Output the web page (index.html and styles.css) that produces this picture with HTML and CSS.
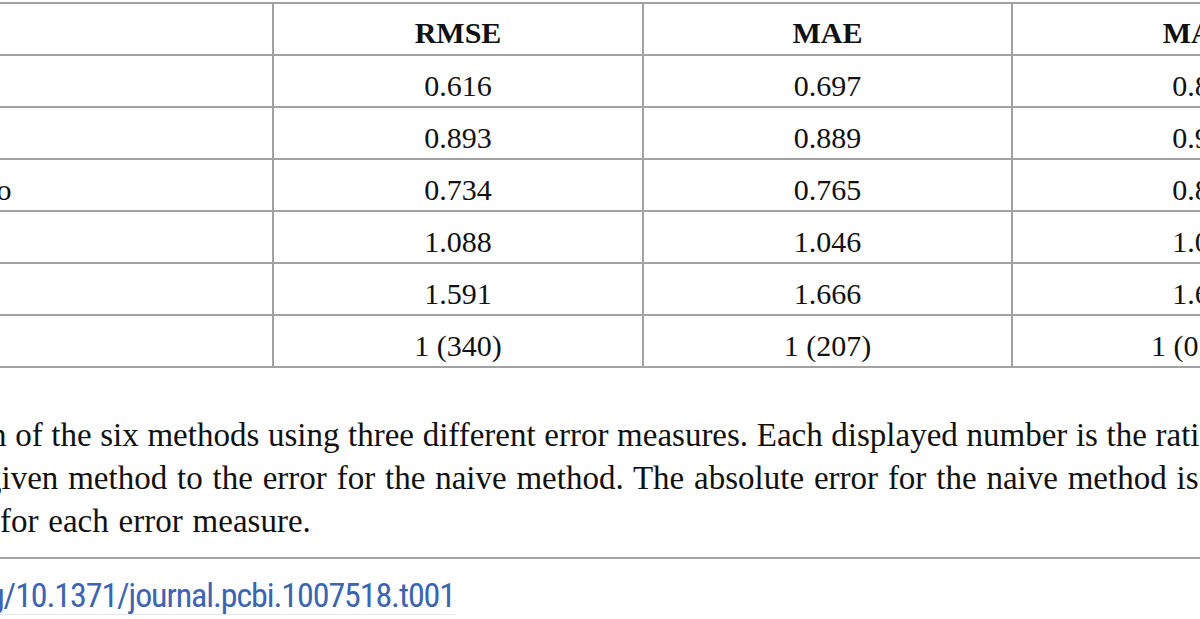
FILE: index.html
```html
<!DOCTYPE html>
<html lang="en">
<head>
<meta charset="utf-8">
<title>Table 1 – error measures</title>
<link rel="stylesheet" href="styles.css">
</head>
<body>
<div class="table" role="table">
  <div class="cell label head" role="columnheader"></div>
  <div class="cell head" role="columnheader">RMSE</div>
  <div class="cell head" role="columnheader">MAE</div>
  <div class="cell head" role="columnheader">MASE</div>

  <div class="cell label">Ensemble</div>
  <div class="cell">0.616</div>
  <div class="cell">0.697</div>
  <div class="cell">0.823</div>

  <div class="cell label">ARIMA</div>
  <div class="cell">0.893</div>
  <div class="cell">0.889</div>
  <div class="cell">0.912</div>

  <div class="cell label">Ridge + Lasso</div>
  <div class="cell">0.734</div>
  <div class="cell">0.765</div>
  <div class="cell">0.847</div>

  <div class="cell label">Prophet</div>
  <div class="cell">1.088</div>
  <div class="cell">1.046</div>
  <div class="cell">1.035</div>

  <div class="cell label">SARIMAX</div>
  <div class="cell">1.591</div>
  <div class="cell">1.666</div>
  <div class="cell">1.642</div>

  <div class="cell label">Naive</div>
  <div class="cell">1 (340)</div>
  <div class="cell">1 (207)</div>
  <div class="cell">1 (0.574)</div>
</div>

<div class="caption">
  <div class="cap-line first">n of the six methods using three different error measures. Each displayed number is the ratio of the error for the</div>
  <div class="cap-line second">given method to the error for the naive method. The absolute error for the naive method is shown in parentheses</div>
  <div class="cap-line">for each error measure.</div>
</div>

<div class="doi">
  <a class="doi-link" href="#">https://doi.org/10.1371/journal.pcbi.1007518.t001</a>
</div>
</body>
</html>
```

FILE: styles.css
```css
html, body {
  margin: 0;
  padding: 0;
  background: #ffffff;
}

body {
  overflow: hidden;
  color: #111111;
  font-family: "Liberation Serif", "Times New Roman", serif;
}

.table {
  display: grid;
  grid-template-columns: 444px 370px 369px 388px;
  width: 1571px;
  margin: 2px 0 0 -170px;
  border-top: 2px solid #a2a2a2;
}

.cell {
  box-sizing: border-box;
  height: 52px;
  padding-top: 13px;
  border-right: 2px solid #a2a2a2;
  border-bottom: 2px solid #a2a2a2;
  font-size: 30px;
  line-height: 33px;
  text-align: center;
  white-space: nowrap;
  overflow: hidden;
}

.cell.head {
  padding-top: 12px;
  font-weight: bold;
}

.cell.label {
  text-align: left;
  padding-left: 8px;
}

.caption {
  margin-top: 46px;
  padding-bottom: 14px;
  border-bottom: 2px solid #a2a2a2;
  font-size: 33px;
  line-height: 43px;
  word-spacing: 1.6px;
}

.cap-line {
  white-space: nowrap;
}

.cap-line.first {
  margin-left: -10px;
  word-spacing: 0.4px;
}

.cap-line.second {
  margin-left: -15px;
}

.doi {
  display: flex;
  justify-content: flex-end;
  width: 455px;
  margin-top: 17px;
}

.doi-link {
  flex: none;
  white-space: nowrap;
  font-family: "Liberation Sans Narrow", "Roboto Condensed", "Liberation Sans", sans-serif;
  font-size: 34px;
  line-height: 38px;
  letter-spacing: -1.1px;
  color: #3d64b0;
  text-decoration: none;
  border-bottom: 1px solid #e3e8f1;
}
```
